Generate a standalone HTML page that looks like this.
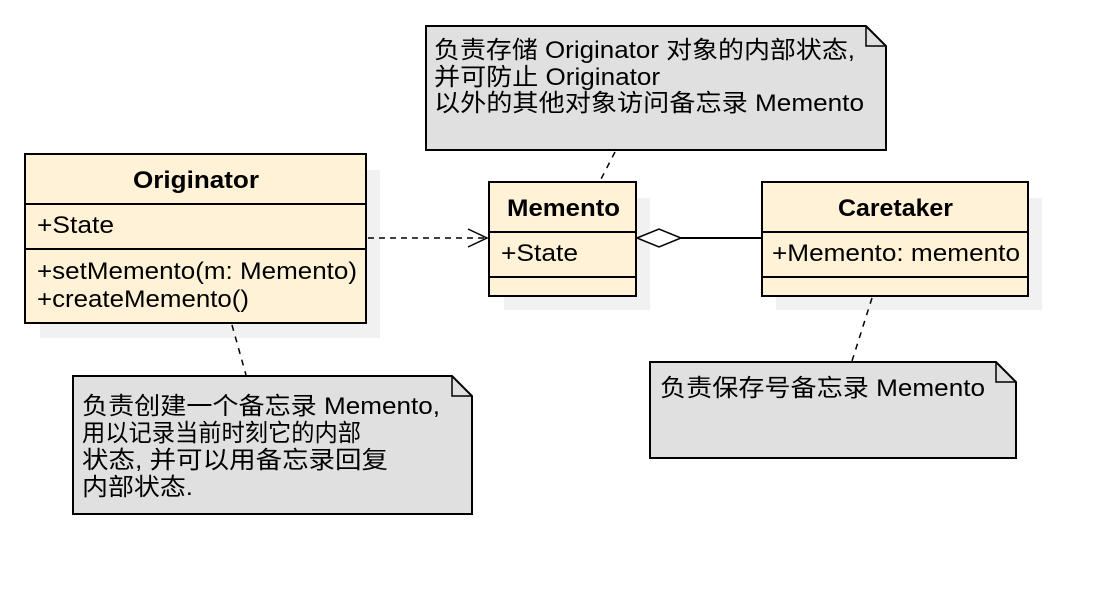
<!DOCTYPE html>
<html><head><meta charset="utf-8"><style>html,body{margin:0;padding:0;background:#fff}svg{display:block}</style></head>
<body>
<svg width="1102" height="590" viewBox="0 0 1102 590" xmlns="http://www.w3.org/2000/svg" font-family="Liberation Sans, Noto Sans CJK SC, sans-serif" font-size="24" fill="#000">
<rect x="40" y="170" width="340" height="168" fill="#f1f1f1"/>
<rect x="504" y="198" width="146" height="112" fill="#f1f1f1"/>
<rect x="776" y="198" width="266" height="112" fill="#f1f1f1"/>
<rect x="25" y="154" width="341" height="169" fill="#fff2d6" stroke="#000" stroke-width="2"/>
<line x1="25" y1="204" x2="366" y2="204" stroke="#000" stroke-width="2"/>
<line x1="25" y1="249" x2="366" y2="249" stroke="#000" stroke-width="2"/>
<text x="133" y="188" font-weight="bold" textLength="126" lengthAdjust="spacingAndGlyphs">Originator</text>
<text x="37" y="233" textLength="77" lengthAdjust="spacingAndGlyphs">+State</text>
<text x="37" y="279" textLength="320" lengthAdjust="spacingAndGlyphs">+setMemento(m: Memento)</text>
<text x="37" y="307" textLength="212" lengthAdjust="spacingAndGlyphs">+createMemento()</text>
<rect x="489" y="182" width="147" height="114" fill="#fff2d6" stroke="#000" stroke-width="2"/>
<line x1="489" y1="232" x2="636" y2="232" stroke="#000" stroke-width="2"/>
<line x1="489" y1="277" x2="636" y2="277" stroke="#000" stroke-width="2"/>
<text x="507" y="216" font-weight="bold" textLength="113" lengthAdjust="spacingAndGlyphs">Memento</text>
<text x="501" y="261" textLength="77" lengthAdjust="spacingAndGlyphs">+State</text>
<rect x="762" y="182" width="266" height="114" fill="#fff2d6" stroke="#000" stroke-width="2"/>
<line x1="762" y1="232" x2="1028" y2="232" stroke="#000" stroke-width="2"/>
<line x1="762" y1="277" x2="1028" y2="277" stroke="#000" stroke-width="2"/>
<text x="838" y="216" font-weight="bold" textLength="115" lengthAdjust="spacingAndGlyphs">Caretaker</text>
<text x="772" y="261" textLength="248" lengthAdjust="spacingAndGlyphs">+Memento: memento</text>
<line x1="368" y1="238" x2="486" y2="238" stroke="#000" stroke-width="1.5" stroke-dasharray="6,5"/>
<polyline points="468,229 487,238 468,247" fill="none" stroke="#000" stroke-width="1.5"/>
<polygon points="637,238 659,229 681,238 659,247" fill="#fff" stroke="#000" stroke-width="1.5"/>
<line x1="681" y1="238" x2="762" y2="238" stroke="#000" stroke-width="2"/>
<line x1="615" y1="152" x2="600" y2="181" stroke="#000" stroke-width="1.5" stroke-dasharray="6,6"/>
<line x1="232" y1="325" x2="246" y2="375" stroke="#000" stroke-width="1.5" stroke-dasharray="6,6"/>
<line x1="872" y1="298" x2="852" y2="361" stroke="#000" stroke-width="1.5" stroke-dasharray="6,6"/>
<path d="M426,26 H866 L886,46 V150 H426 Z" fill="#e0e0e0" stroke="#000" stroke-width="2"/>
<path d="M866,26 V46 H886" fill="none" stroke="#000" stroke-width="1.5"/>
<text x="434" y="58" textLength="421" lengthAdjust="spacingAndGlyphs">负责存储 Originator 对象的内部状态,</text>
<text x="434" y="85" textLength="226" lengthAdjust="spacingAndGlyphs">并可防止 Originator</text>
<text x="434" y="111" textLength="430" lengthAdjust="spacingAndGlyphs">以外的其他对象访问备忘录 Memento</text>
<path d="M73,376 H452 L472,396 V514 H73 Z" fill="#e0e0e0" stroke="#000" stroke-width="2"/>
<path d="M452,376 V396 H472" fill="none" stroke="#000" stroke-width="1.5"/>
<text x="82" y="414" textLength="358" lengthAdjust="spacingAndGlyphs">负责创建一个备忘录 Memento,</text>
<text x="82" y="441" textLength="279" lengthAdjust="spacingAndGlyphs">用以记录当前时刻它的内部</text>
<text x="82" y="468" textLength="306" lengthAdjust="spacingAndGlyphs">状态, 并可以用备忘录回复</text>
<text x="82" y="495" textLength="111" lengthAdjust="spacingAndGlyphs">内部状态.</text>
<path d="M650,362 H996 L1016,382 V458 H650 Z" fill="#e0e0e0" stroke="#000" stroke-width="2"/>
<path d="M996,362 V382 H1016" fill="none" stroke="#000" stroke-width="1.5"/>
<text x="660" y="396" textLength="325" lengthAdjust="spacingAndGlyphs">负责保存号备忘录 Memento</text>
</svg>
</body></html>
